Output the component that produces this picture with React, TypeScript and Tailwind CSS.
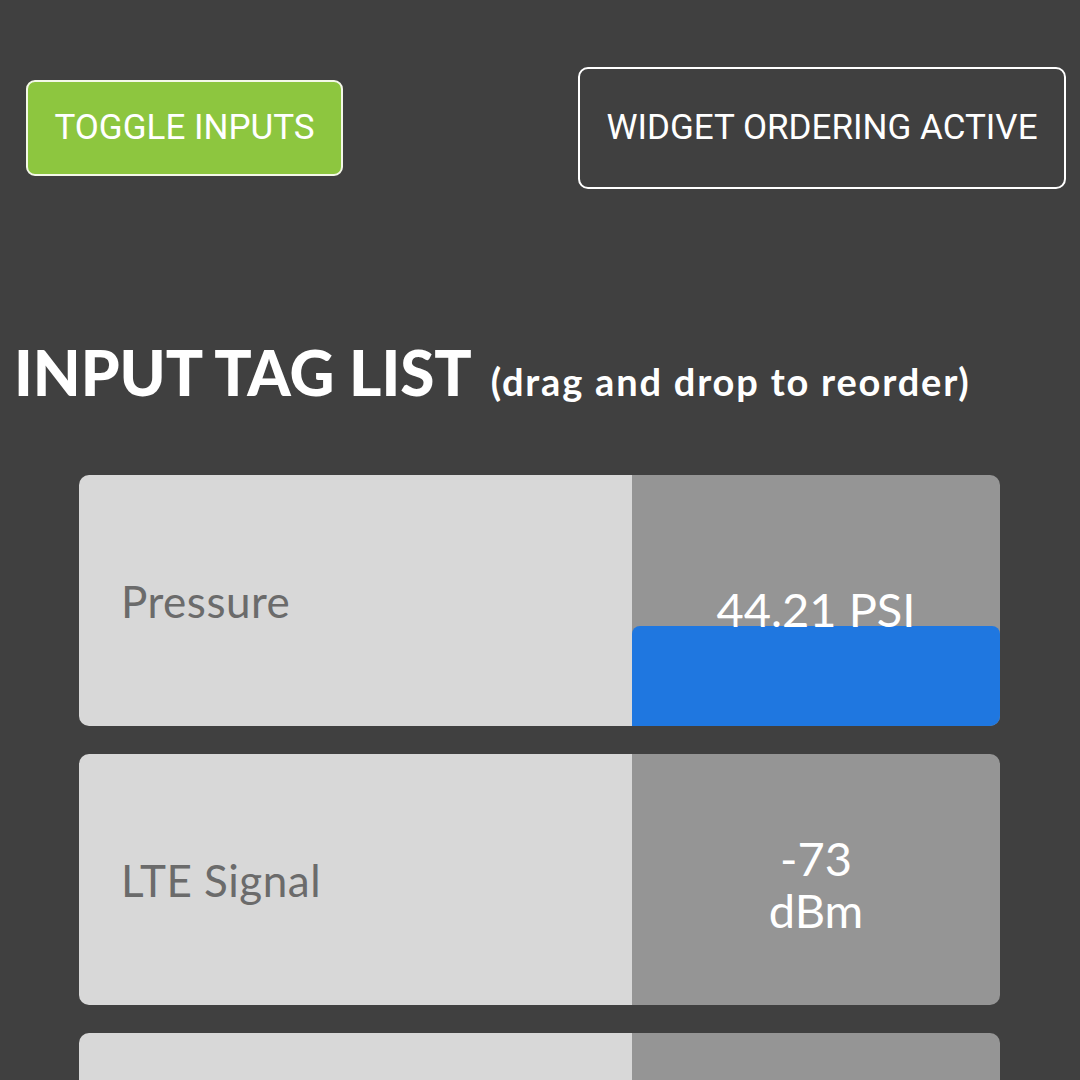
import React from "react";

type Tag = {
  name: string;
  value: string[];
  level?: number;
};

const tags: Tag[] = [
  { name: "Pressure", value: ["44.21 PSI"], level: 40 },
  { name: "LTE Signal", value: ["-73", "dBm"] },
  { name: "Battery", value: ["12.6 V"] },
];

const TagCard: React.FC<{ tag: Tag }> = ({ tag }) => {
  return (
    <div className="flex h-[251px] shrink-0 rounded-[10px] overflow-hidden">
      <div className="flex-1 bg-[#d8d8d8] flex items-center pl-[42px]">
        <span className="text-[44px] text-[#6b6b6b] font-['Lato',sans-serif] tracking-[0.5px]">
          {tag.name}
        </span>
      </div>
      <div className="relative w-[368px] bg-[#959595] flex flex-col items-center justify-center">
        {tag.level !== undefined && (
          <div
            className="absolute left-0 right-0 bottom-0 bg-[#1f77e0] rounded-t-[8px]"
            style={{ height: `${tag.level}%` }}
          />
        )}
        <div
          className={`relative text-white text-[47px] leading-[52px] font-['Lato',sans-serif] text-center ${
            tag.level !== undefined ? "mt-[16px]" : "mt-[8px]"
          }`}
        >
          {tag.value.map((line) => (
            <div key={line}>{line}</div>
          ))}
        </div>
      </div>
    </div>
  );
};

export default function App() {
  return (
    <div className="h-[1080px] bg-[#404040] overflow-hidden">
      <div className="flex items-center justify-between pt-[67px] pl-[26px] pr-[14px]">
        <button className="h-[96px] w-[317px] bg-[#8dc63f] border-2 border-[#f4f8e8] rounded-[9px] text-white text-[35px] font-['Roboto',sans-serif]">
          TOGGLE INPUTS
        </button>
        <button className="h-[122px] w-[488px] border-2 border-white rounded-[10px] text-white text-[35px] font-['Roboto',sans-serif]">
          WIDGET ORDERING ACTIVE
        </button>
      </div>

      <h1 className="mt-[152px] pl-[14px] flex items-baseline gap-[19px] text-white font-['Lato',sans-serif]">
        <span className="text-[62px] font-black leading-none">INPUT TAG LIST</span>
        <span className="text-[38px] font-bold leading-none tracking-[1.8px]">
          (drag and drop to reorder)
        </span>
      </h1>

      <div className="mt-[72px] pl-[79px] pr-[80px] flex flex-col gap-[28px]">
        {tags.map((tag) => (
          <TagCard key={tag.name} tag={tag} />
        ))}
      </div>
    </div>
  );
}
